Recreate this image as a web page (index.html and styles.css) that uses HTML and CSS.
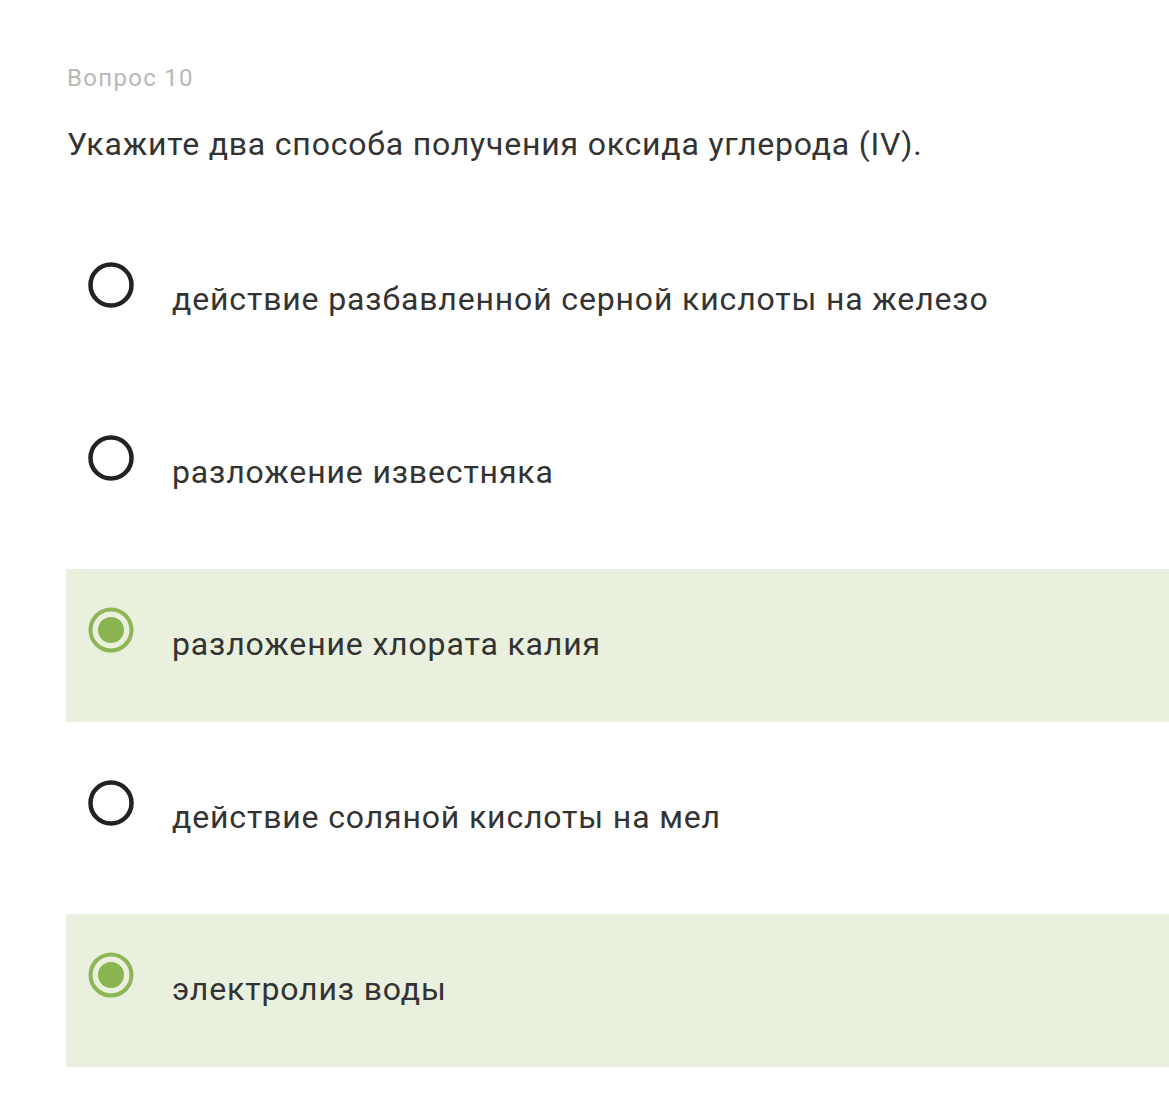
FILE: index.html
```html
<!DOCTYPE html>
<html lang="ru">
<head>
    <meta charset="UTF-8">
    <meta name="viewport" content="width=device-width, initial-scale=1.0">
    <title>Вопрос 10</title>
    <link rel="stylesheet" href="styles.css">
</head>
<body>

    <div class="quiz">
        <div class="quiz-label">Вопрос 10</div>
        <div class="quiz-question">Укажите два способа получения оксида углерода (IV).</div>

        <!-- Варианты ответа -->
        <div class="answers">
            <div class="answer">
                <svg class="radio" viewBox="0 0 46 46"><circle cx="23" cy="23" r="20.5" class="ring"/></svg>
                <span class="answer-text">действие разбавленной серной кислоты на железо</span>
            </div>
            <div class="answer">
                <svg class="radio" viewBox="0 0 46 46"><circle cx="23" cy="23" r="20.5" class="ring"/></svg>
                <span class="answer-text">разложение известняка</span>
            </div>
            <div class="answer selected">
                <svg class="radio" viewBox="0 0 46 46"><circle cx="23" cy="23" r="20.5" class="ring"/><circle cx="23" cy="23" r="13" class="dot"/></svg>
                <span class="answer-text">разложение хлората калия</span>
            </div>
            <div class="answer">
                <svg class="radio" viewBox="0 0 46 46"><circle cx="23" cy="23" r="20.5" class="ring"/></svg>
                <span class="answer-text">действие соляной кислоты на мел</span>
            </div>
            <div class="answer selected">
                <svg class="radio" viewBox="0 0 46 46"><circle cx="23" cy="23" r="20.5" class="ring"/><circle cx="23" cy="23" r="13" class="dot"/></svg>
                <span class="answer-text">электролиз воды</span>
            </div>
        </div>
    </div>

</body>
</html>
```

FILE: styles.css
```css
body {
    font-family: Roboto, "Noto Sans", Arial, sans-serif;
    background-color: #fff;
    color: #333;
    margin: 0;
}

.quiz {
    padding: 68px 0 0 66px;
}

.quiz-label {
    font-size: 24px;
    line-height: 1;
    letter-spacing: 1.3px;
    color: #b8b8b8;
    margin: -2px 0 0 1px;
}

.quiz-question {
    font-size: 32px;
    line-height: 1;
    letter-spacing: 0.8px;
    margin: 38px 0 0 1px;
    color: #333;
}

.answers {
    margin-top: 64px;
    display: flex;
    flex-direction: column;
    gap: 19.5px;
}

.answer {
    display: flex;
    align-items: flex-start;
    height: 153px;
    box-sizing: border-box;
    padding: 38px 0 0 22px;
}

.answer.selected {
    background-color: #e9f0dd;
}

.radio {
    width: 46px;
    height: 46px;
    flex-shrink: 0;
}

.ring {
    fill: none;
    stroke: #222;
    stroke-width: 4.5;
}

.selected .ring {
    stroke: #8db657;
    stroke-width: 4;
}

.dot {
    fill: #8ab450;
}

.answer-text {
    font-size: 32px;
    line-height: 1;
    letter-spacing: 0.85px;
    margin: 21px 0 0 38px;
    color: #333;
}
```
